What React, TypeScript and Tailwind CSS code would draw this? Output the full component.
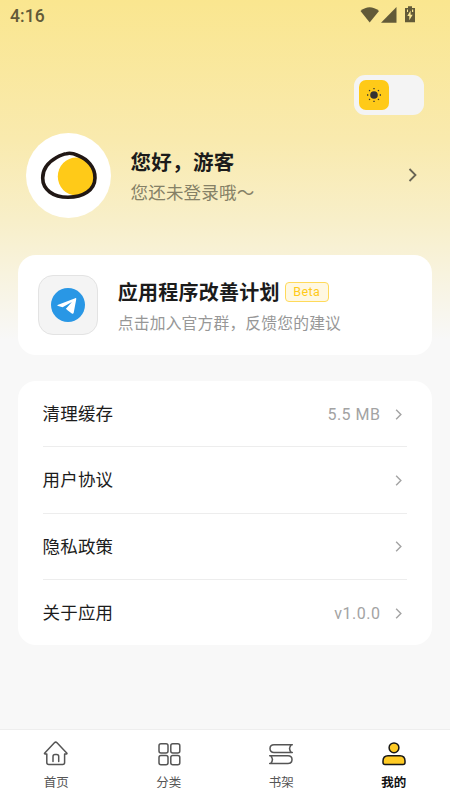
import React from "react";

function Chevron({ className }: { className: string }) {
  return (
    <svg viewBox="0 0 8 14" className={className} fill="none" stroke="currentColor">
      <path d="M1 1l6 6-6 6" />
    </svg>
  );
}

function StatusBar() {
  return (
    <div className="flex h-8 items-start justify-between pl-[10px] pr-[34px] text-[#625a38]">
      <span className="mt-[4px] text-[17.5px] leading-6 font-medium tracking-[0.1px]">4:16</span>
      <svg width="56" height="18" viewBox="0 0 56 18" className="mt-[6px]" fill="currentColor">
        <path d="M0.5 5Q9.500 -2.500 19 5L9.700 16.500Z" />
        <path d="M36.500 1v15.700H21z" />
        <path fillRule="evenodd" d="M48 0.300h4V2h3v14.200H45V2h3zM47 3.500V6h1V3.500zM52 3.500V6h1.200V3.500zM50.600 4.500L47.300 10h2v4.300l3.400-5.600h-2.100z" />
      </svg>
    </div>
  );
}

function Sun() {
  return (
    <svg width="16" height="16" viewBox="0 0 16 16" fill="#333333" stroke="#333333">
      <circle cx="8" cy="8" r="3.800" stroke="none" />
      <path
        d="M8 1v1.300M8 13.700V15M1 8h1.300M13.700 8H15M3.100 3.100l.9.900M12 12l.9.900M3.100 12.900L4 12M12 4l.9-.9"
        strokeWidth="1.300"
      />
    </svg>
  );
}

function Row({ label, value, last }: { label: string; value?: string; last?: boolean }) {
  return (
    <div
      className={
        last
          ? "flex h-[66px] items-center text-[#a3a3a3]"
          : "flex h-[66.3px] items-center border-b border-[#ededed] text-[#a3a3a3]"
      }
    >
      <span className="mt-px flex-1 text-[17.500px] leading-6 tracking-[0.2px] text-[#1c1c1c]">{label}</span>
      {value && <span className="mr-[14.500px] mt-[2px] text-[16px] leading-6 tracking-[0.5px]">{value}</span>}
      <Chevron className="mt-px mr-[5px] h-[11px] w-[7px] stroke-[1.800]" />
    </div>
  );
}

function Tab({ label, active, children }: { label: string; active?: boolean; children: React.ReactNode }) {
  return (
    <div className="flex flex-1 flex-col items-center pt-[10px]">
      <svg
        width="28"
        height="28"
        viewBox="0 0 28 28"
        fill="none"
        stroke={active ? "#171717" : "#555555"}
        strokeWidth="1.500"
        strokeLinecap="round"
        strokeLinejoin="round"
      >
        {children}
      </svg>
      <span
        className={
          active
            ? "mt-[6px] text-[12.500px] leading-[18px] font-bold text-[#111111]"
            : "mt-[6px] text-[12.500px] leading-[18px] text-[#555555]"
        }
      >
        {label}
      </span>
    </div>
  );
}

export default function App() {
  return (
    <div className="flex h-[800px] w-[450px] flex-col overflow-hidden bg-[#f8f8f8] font-[Roboto,'Noto_Sans_CJK_SC',sans-serif]">
      <div className="flex-1 bg-[linear-gradient(to_bottom,#fae68f_0px,#f9eaae_140px,#f8efc9_220px,#f8f8f8_340px)]">
        <StatusBar />
        <div className="mt-[43px] flex justify-end pr-[26px]">
          <div className="flex h-10 w-[70px] items-center rounded-[11px] bg-[#f4f4f4] pl-[5px]">
            <div className="flex size-[30px] items-center justify-center rounded-[7px] bg-[#ffca18]">
              <Sun />
            </div>
          </div>
        </div>

        <div className="mt-[18px] flex h-[84px] items-center pr-[33.5px] pl-[26px]">
          <div className="size-[85px] shrink-0 rounded-full bg-white">
            <svg width="85" height="85" viewBox="0 0 85 85">
              <ellipse cx="50.300" cy="43.500" rx="18.500" ry="19" fill="#ffca18" />
              <path
                d="M40.500 20.700C43 20 48 20.700 52 22.500C61 26 69.200 34 69 45C68.700 57.500 57 64.300 42 64.300C27 64.300 16.700 56.500 16.700 45C16.700 35.500 22.500 29 30.500 24.500C35 22 37.500 20.900 40.500 20.700Z"
                fill="none"
                stroke="#211815"
                strokeWidth="3.600"
              />
            </svg>
          </div>
          <div className="ml-[19.500px] flex-1">
            <div className="mt-[5px] text-[20.500px] leading-[30px] font-bold tracking-[0.3px] text-[#1b1b1b]">您好，游客</div>
            <div className="mt-[1.500px] text-[17.500px] leading-[28px] tracking-[0.2px] text-[#858066]">您还未登录哦～</div>
          </div>
          <Chevron className="h-[14px] w-[9px] stroke-[1.800] text-[#686454]" />
        </div>

        <div className="ml-[17.5px] mt-[38px] flex h-[99.5px] w-[414.500px] items-center rounded-[18px] bg-white pl-[20px]">
          <div className="flex size-[60px] items-center justify-center rounded-[15px] border border-[#e3e3e3] bg-[#f4f4f4]">
            <svg width="34" height="34" viewBox="0 0 34 34">
              <circle cx="17" cy="17" r="17" fill="#2997e5" />
              <path
                d="M7.200 16.700L24.200 10.200C25.100 9.900 25.500 10.500 25.200 11.500L22.700 24.700C22.500 25.800 21.700 26.100 20.800 25.500L16.500 22.300L14.900 20.700L20.900 13.900L11.600 19.200L7.200 17.900C6.100 17.600 6 17.200 7.200 16.700Z"
                fill="#ffffff"
              />
            </svg>
          </div>
          <div className="ml-[20.300px]">
            <div className="mt-[4px] flex h-[30px] items-center">
              <span className="text-[20px] leading-[30px] font-bold tracking-[0.250px] text-[#1b1b1b]">应用程序改善计划</span>
              <span className="ml-[5px] flex h-[20px] w-[44px] -translate-y-px items-center justify-center rounded-[4px] border border-[#ffda5a] bg-[#fff8e2] pt-px text-[12.500px] tracking-[0.4px] text-[#ffca18]">
                Beta
              </span>
            </div>
            <div className="mt-[4px] text-[15.800px] leading-[24px] tracking-[0.150px] text-[#979797]">
              点击加入官方群，反馈您的建议
            </div>
          </div>
        </div>

        <div className="ml-[17.5px] mt-[26.5px] h-[264px] w-[414.500px] rounded-[18px] bg-white px-[25px]">
          <Row label="清理缓存" value="5.5 MB" />
          <Row label="用户协议" />
          <Row label="隐私政策" />
          <Row label="关于应用" value="v1.0.0" last />
        </div>
      </div>

      <nav className="flex h-[71px] border-t border-[#eeeeee] bg-white">
        <Tab label="首页">
          <path d="M4.800 14v8.500q0 2 2 2h13.800q2 0 2-2V14M4.800 14H3.200q-1.200 0-.4-1L12.400 2.800q1.300-1.300 2.600 0L24.700 13q.7 1-.4 1h-1.700M11 21.500v-5q0-2 2-2h1.700q2 0 2 2v5" />
        </Tab>
        <Tab label="分类">
          <rect x="4" y="3.700" width="9" height="9.200" rx="2" />
          <rect x="15.800" y="3.700" width="9" height="9.200" rx="2" />
          <rect x="4" y="15.500" width="9" height="9.200" rx="2" />
          <rect x="15.800" y="15.500" width="9" height="9.200" rx="2" />
        </Tab>
        <Tab label="书架">
          <path d="M25.300 4.700H7q-4 0-4 3.900t4 3.900h18.300M24.300 4.700q-3.500 3.900 0 7.800M2.700 15.700H21q4 0 4 3.900t-4 3.900H2.700M3.700 15.700q3.500 3.900 0 7.800" />
        </Tab>
        <Tab label="我的" active>
          <circle cx="14" cy="7.800" r="4.900" fill="#ffcb25" />
          <path d="M8 15.700h12q5 0 5 5.300v1.500q0 2-2 2H5q-2 0-2-2V21q0-5.300 5-5.300Z" fill="#ffcb25" />
        </Tab>
      </nav>
    </div>
  );
}
